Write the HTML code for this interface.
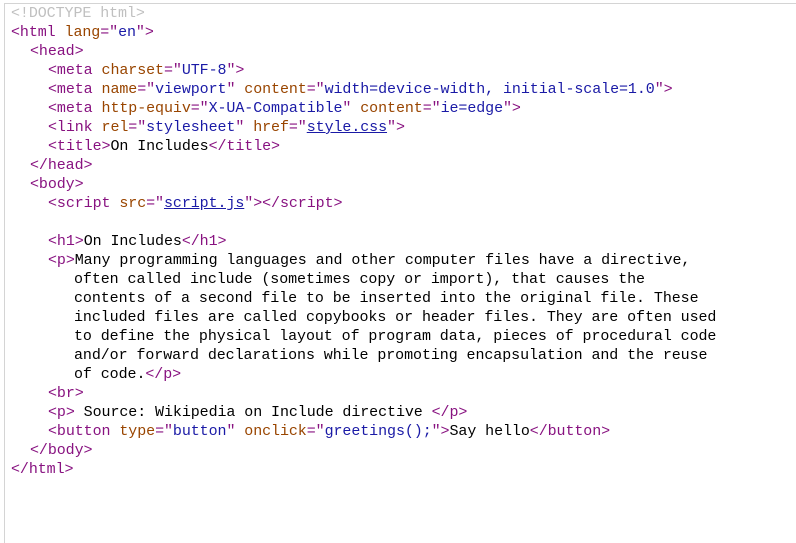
<!DOCTYPE html>
<html><head><meta charset="utf-8"><style>
html,body{margin:0;padding:0;background:#fff;width:796px;height:536px;overflow:hidden}
.g{position:absolute;left:4px;top:3px;width:1px;height:540px;background:#d4d4d4}
.t{position:absolute;left:4px;top:3px;width:800px;height:1px;background:#d4d4d4}
.l{position:absolute;font-family:"Liberation Mono",monospace;font-size:15px;line-height:19px;white-space:pre;color:#000;letter-spacing:-0.08px}
.c{color:#c0c0c0}.k{color:#881280}.a{color:#994500}.v{color:#1a1aa6}
a{color:#1a1aa6;text-decoration:underline}
</style></head><body>
<div class="g"></div><div class="t"></div>
<div class="l" style="left:11px;top:4px"><span class="c">&lt;!DOCTYPE html&gt;</span></div>
<div class="l" style="left:11px;top:23px"><span class="k">&lt;html <span class="a">lang</span>="<span class="v">en</span>"&gt;</span></div>
<div class="l" style="left:30px;top:42px"><span class="k">&lt;head&gt;</span></div>
<div class="l" style="left:48px;top:61px"><span class="k">&lt;meta <span class="a">charset</span>="<span class="v">UTF-8</span>"&gt;</span></div>
<div class="l" style="left:48px;top:80px"><span class="k">&lt;meta <span class="a">name</span>="<span class="v">viewport</span>" <span class="a">content</span>="<span class="v">width=device-width, initial-scale=1.0</span>"&gt;</span></div>
<div class="l" style="left:48px;top:99px"><span class="k">&lt;meta <span class="a">http-equiv</span>="<span class="v">X-UA-Compatible</span>" <span class="a">content</span>="<span class="v">ie=edge</span>"&gt;</span></div>
<div class="l" style="left:48px;top:118px"><span class="k">&lt;link <span class="a">rel</span>="<span class="v">stylesheet</span>" <span class="a">href</span>="<a>style.css</a>"&gt;</span></div>
<div class="l" style="left:48px;top:137px"><span class="k">&lt;title&gt;</span>On Includes<span class="k">&lt;/title&gt;</span></div>
<div class="l" style="left:30px;top:156px"><span class="k">&lt;/head&gt;</span></div>
<div class="l" style="left:30px;top:175px"><span class="k">&lt;body&gt;</span></div>
<div class="l" style="left:48px;top:194px"><span class="k">&lt;script <span class="a">src</span>="<a>script.js</a>"&gt;&lt;/script&gt;</span></div>
<div class="l" style="left:48px;top:232px"><span class="k">&lt;h1&gt;</span>On Includes<span class="k">&lt;/h1&gt;</span></div>
<div class="l" style="left:48px;top:251px"><span class="k">&lt;p&gt;</span>Many programming languages and other computer files have a directive,</div>
<div class="l" style="left:74px;top:270px">often called include (sometimes copy or import), that causes the</div>
<div class="l" style="left:74px;top:289px">contents of a second file to be inserted into the original file. These</div>
<div class="l" style="left:74px;top:308px">included files are called copybooks or header files. They are often used</div>
<div class="l" style="left:74px;top:327px">to define the physical layout of program data, pieces of procedural code</div>
<div class="l" style="left:74px;top:346px">and/or forward declarations while promoting encapsulation and the reuse</div>
<div class="l" style="left:74px;top:365px">of code.<span class="k">&lt;/p&gt;</span></div>
<div class="l" style="left:48px;top:384px"><span class="k">&lt;br&gt;</span></div>
<div class="l" style="left:48px;top:403px"><span class="k">&lt;p&gt;</span> Source: Wikipedia on Include directive <span class="k">&lt;/p&gt;</span></div>
<div class="l" style="left:48px;top:422px"><span class="k">&lt;button <span class="a">type</span>="<span class="v">button</span>" <span class="a">onclick</span>="<span class="v">greetings();</span>"&gt;</span>Say hello<span class="k">&lt;/button&gt;</span></div>
<div class="l" style="left:30px;top:441px"><span class="k">&lt;/body&gt;</span></div>
<div class="l" style="left:11px;top:460px"><span class="k">&lt;/html&gt;</span></div>
</body></html>
